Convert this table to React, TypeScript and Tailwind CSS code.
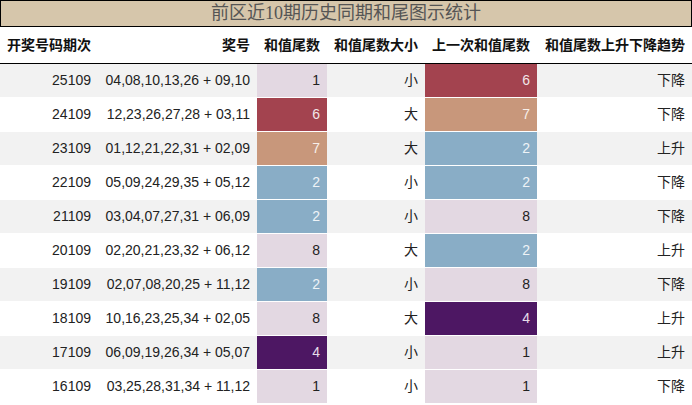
const LIGHT = 'bg-[#e3d8e2] text-[#222]';
const RED = 'bg-[#a3434f] text-[#f1e6e8]';
const TAN = 'bg-[#c8977b] text-[#f7efe9]';
const BLUE = 'bg-[#89adc6] text-[#eef3f7]';
const PURPLE = 'bg-[#4d1763] text-[#e6dcea]';

const colorOf: Record<number, string> = {
  1: LIGHT,
  8: LIGHT,
  6: RED,
  7: TAN,
  2: BLUE,
  4: PURPLE,
};

const rows = [
  { issue: '25109', nums: '04,08,10,13,26 + 09,10', tail: 1, size: '小', prev: 6, trend: '下降' },
  { issue: '24109', nums: '12,23,26,27,28 + 03,11', tail: 6, size: '大', prev: 7, trend: '下降' },
  { issue: '23109', nums: '01,12,21,22,31 + 02,09', tail: 7, size: '大', prev: 2, trend: '上升' },
  { issue: '22109', nums: '05,09,24,29,35 + 05,12', tail: 2, size: '小', prev: 2, trend: '下降' },
  { issue: '21109', nums: '03,04,07,27,31 + 06,09', tail: 2, size: '小', prev: 8, trend: '下降' },
  { issue: '20109', nums: '02,20,21,23,32 + 06,12', tail: 8, size: '大', prev: 2, trend: '上升' },
  { issue: '19109', nums: '02,07,08,20,25 + 11,12', tail: 2, size: '小', prev: 8, trend: '下降' },
  { issue: '18109', nums: '10,16,23,25,34 + 02,05', tail: 8, size: '大', prev: 4, trend: '上升' },
  { issue: '17109', nums: '06,09,19,26,34 + 05,07', tail: 4, size: '小', prev: 1, trend: '上升' },
  { issue: '16109', nums: '03,25,28,31,34 + 11,12', tail: 1, size: '小', prev: 1, trend: '下降' },
];

const cols = 'grid grid-cols-[98px_159px_70px_98px_112px_155px]';
const cell = 'flex items-center justify-end pr-[7px]';

export default function App() {
  return (
    <div className="w-[692px] h-[405px] bg-white text-[14px] text-[#222] font-['Liberation_Sans','Noto_Sans_CJK_SC',sans-serif] overflow-hidden">
      <div className="h-[27px] border border-black bg-[#d6c6ab] flex items-center justify-center text-[18px] text-[#555] font-['Liberation_Serif','Noto_Sans_CJK_SC',serif]">
        前区近10期历史同期和尾图示统计
      </div>
      <div className={`${cols} h-[37px] pt-[1px] border-b border-black font-bold text-[#111]`}>
        <div className={cell}>开奖号码期次</div>
        <div className={cell}>奖号</div>
        <div className={cell}>和值尾数</div>
        <div className={cell}>和值尾数大小</div>
        <div className={cell}>上一次和值尾数</div>
        <div className={cell}>和值尾数上升下降趋势</div>
      </div>
      {rows.map((r, i) => (
        <div
          key={r.issue}
          className={`${cols} h-[34px] border-b border-white ${i % 2 === 0 ? 'bg-[#f2f2f2]' : 'bg-white'}`}
        >
          <div className={cell}>{r.issue}</div>
          <div className={cell}>{r.nums}</div>
          <div className={`${cell} ${colorOf[r.tail]}`}>{r.tail}</div>
          <div className={cell}>{r.size}</div>
          <div className={`${cell} ${colorOf[r.prev]}`}>{r.prev}</div>
          <div className={cell}>{r.trend}</div>
        </div>
      ))}
    </div>
  );
}
